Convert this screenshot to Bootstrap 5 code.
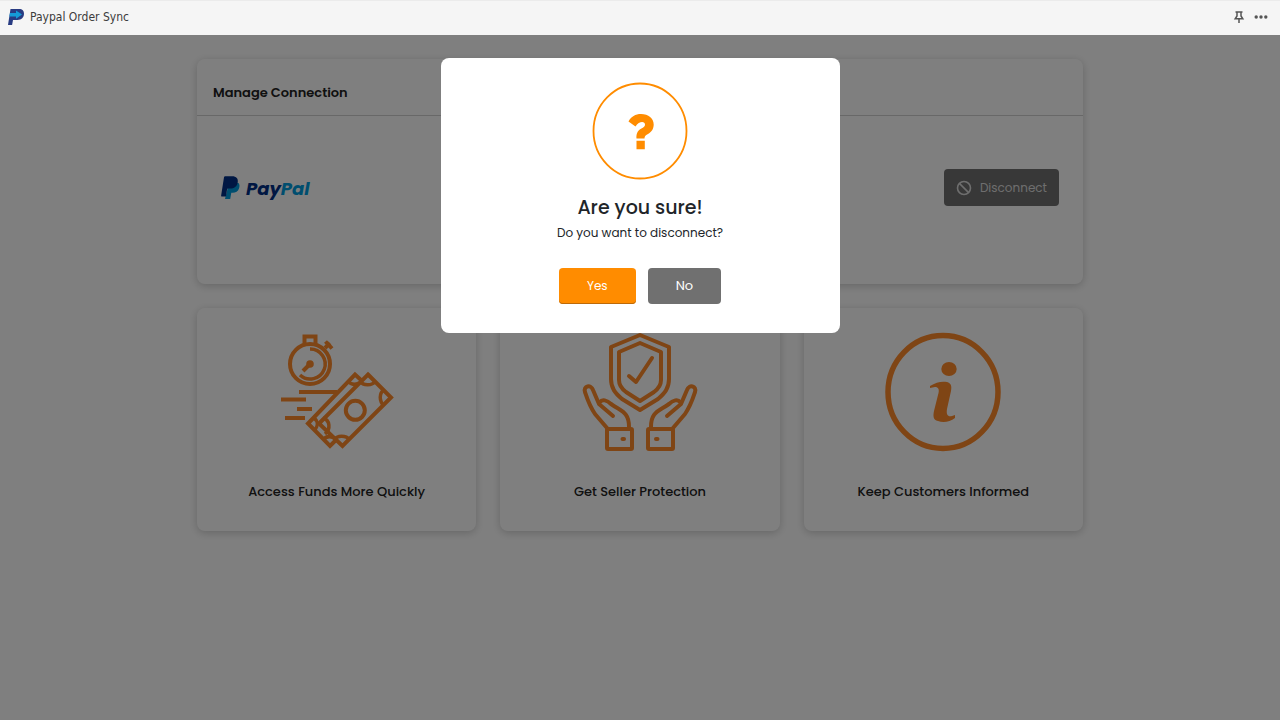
<!DOCTYPE html>
<html lang="en">
<head>
<meta charset="utf-8">
<meta name="viewport" content="width=device-width, initial-scale=1">
<title>Paypal Order Sync</title>
<link href="https://cdn.jsdelivr.net/npm/bootstrap@5.3.0/dist/css/bootstrap.min.css" rel="stylesheet">
<style>
  body { font-family: Poppins, Inter, "Open Sans", sans-serif; background: #fff; color: #212529; font-size: 13px; }
  .app-bar { height: 35px; background: #f5f5f5; border-top: 1px solid #ebebeb; padding: 0 8px 2px; }
  .app-title { font: 12px/18px "DejaVu Sans Condensed", "Noto Sans", sans-serif; color: #3c3c3c; margin-left: 6px; }
  .icon-btn { border: 0; background: none; padding: 0; color: #555; display: flex; }
  .page-wrap { max-width: 910px; padding: 24px 12px; }
  .panel { background: #fff; border: 0; border-radius: 8px; box-shadow: 0 2px 8px rgba(0, 0, 0, .2); }
  .panel-head { padding: 22px 16px 10px; border-bottom: 1px solid #d0d0d0; }
  .panel-head h1 { font-size: 13px; line-height: 24px; font-weight: 600; margin: 0; color: #222; }
  .panel-main { padding: 53px 24px 78px; }
  .btn-off { background: #707070; color: #ddd; font-size: 12px; line-height: 25px; padding: 6px 12px; border: 0; border-radius: 4px; }
  .feature { padding: 24px 16px 25px; min-height: 223px; }
  .feature h2 { font-size: 13px; line-height: 20px; font-weight: 500; margin: 30px 0 0; color: #222; }
  .feature svg { color: #ff8a2b; }
  .shade { background: rgba(0, 0, 0, .5); position: absolute; }
  .ask { max-width: 399px; margin: 23px auto; }
  .ask .modal-content { border: 0; border-radius: 8px; padding: 24px 24px 29px; }
  .ask h2 { font-size: 19px; line-height: 28px; font-weight: 500; margin: 14px 0 0; }
  .ask p { font-size: 12px; line-height: 20px; margin: 1px 0 25px; }
  .btn-ask { border: 0; border-radius: 4px; height: 36px; padding: 0 28px; color: #fff; }
  .btn-yes { background: #ff8c00; font-size: 12px; box-shadow: inset 0 -1px #bd6a08; }
  .btn-no { background: #707070; font-size: 13px; }
</style>
</head>
<body class="d-flex flex-column min-vh-100">
<header class="app-bar d-flex align-items-center">
  <svg width="16" height="18" viewBox="0 0 16 18" aria-hidden="true"><path fill="#283b82" d="M2.500 1H11c3.500 0 5 2 5 4.800C16 9.500 13.400 12 9.500 12H5l-.900 5H0z"/><path fill="#159bd7" d="M2 5h6V2.500l6 4-6 4.300V8.500H1.400z"/></svg>
  <span class="app-title me-auto">Paypal Order Sync</span>
  <button class="icon-btn me-2" aria-label="Pin"><svg width="14" height="14" viewBox="0 0 14 14" fill="none" stroke="currentColor" stroke-width="1.500"><path d="M3.500 2h7M5 2v4L3.200 8.800h7.600L9 6V2M7 8.800V13"/></svg></button>
  <button class="icon-btn me-1" aria-label="More options"><svg width="14" height="14" viewBox="0 0 14 14" fill="currentColor"><circle cx="2.200" cy="7" r="1.700"/><circle cx="7" cy="7" r="1.700"/><circle cx="11.800" cy="7" r="1.700"/></svg></button>
</header>

<main class="position-relative flex-fill">
  <div class="container page-wrap">
    <section class="card panel mb-4">
      <div class="panel-head"><h1>Manage Connection</h1></div>
      <div class="panel-main d-flex justify-content-between align-items-center">
        <svg width="100" height="26" viewBox="0 0 100 26" role="img" aria-label="PayPal">
          <path fill="#009cde" d="M8 8h9.500c1.300 1.500 1.200 3.600.500 5.600-1 3-3.300 4.200-6.300 4.200h-1.400L9.200 24H4z"/>
          <path fill="#002f86" d="M3 2.200Q3.200 1.300 4.100 1.300H11c4.400 0 6.500 2.300 5.700 6.300-.8 4-3.500 6-7.500 6H7.300c-.8 0-1.100.4-1.300 1.200L5 21.500H.600Q0 21.500.100 20.800z"/>
          <text x="25" y="20" font-family="Poppins, Lato, sans-serif" font-size="18" font-weight="700" font-style="italic"><tspan fill="#002f86">Pay</tspan><tspan fill="#009cde">Pal</tspan></text>
        </svg>
        <button class="btn btn-off d-flex align-items-center gap-2">
          <svg width="16" height="16" viewBox="0 0 16 16" fill="none" stroke="currentColor" stroke-width="1.600" aria-hidden="true"><circle cx="8" cy="8" r="6.500"/><path d="m3.400 3.400 9.200 9.200"/></svg>
          Disconnect
        </button>
      </div>
    </section>

    <div class="row g-4">
      <div class="col-4">
        <section class="card panel feature align-items-center text-center h-100">
          <svg width="120" height="120" viewBox="0 0 120 120" fill="none" stroke="currentColor" stroke-width="4" aria-hidden="true">
            <circle cx="33" cy="32" r="20"/><path d="M27.500 13V4.500h11V13"/><path d="m48 16 5-5M48.500 9.500l6.500 7"/>
            <path d="M33 17a15 15 0 1 1-10 26" stroke-width="3.500"/><circle cx="33" cy="32" r="3.800" fill="currentColor" stroke="none"/><path d="m33 32-7 7"/>
            <path d="M22 60h38M4 67.500h25M20 77h15M8 86h20" stroke-width="3.800"/>
            <path d="m84 48-6-5.500-47 49L53 114l6-6"/>
            <path d="m91 42.500 23 23L65.500 114 42 91.500z"/>
            <circle cx="78.300" cy="78.300" r="9.500"/>
            <path d="M83 49c3 5 12 5 16 0M107 58c-5 3-5 11 0 16M46 86c7 2 8 11 2 16M57 108c3-5 12-5 16 0M71 49c3 4 7 4 11 2M37 86c4 3 4 8 1 12M46 108c3-4 7-4 11-2" stroke-width="3.500"/>
          </svg>
          <h2>Access Funds More Quickly</h2>
        </section>
      </div>
      <div class="col-4">
        <section class="card panel feature align-items-center text-center h-100">
          <svg width="120" height="120" viewBox="0 0 120 120" fill="none" stroke="currentColor" stroke-width="4" stroke-linejoin="round" stroke-linecap="round" aria-hidden="true">
            <path d="M60 3 89 15v32c0 9-4 14-11 20L60 78 42 67c-7-6-11-11-11-20V15z"/>
            <path d="m60 11 21 9v28c0 6-3 9-7 12L60 69 46 60c-4-3-7-6-7-12V20z"/>
            <path d="m49 44 7 6 16-24"/>
            <g><path d="M27 96 15 82C9 73 7 66 5 60c-2-6 6-8 8-2l6 14 14 12M20 70c2-3 7-2 11 2 7 5 12 6 15 11 3 4 3 8 3 12"/><rect x="27" y="97" width="25" height="20" rx="1"/><path d="M42.500 107h1.500"/></g>
            <g transform="matrix(-1 0 0 1 120 0)"><path d="M27 96 15 82C9 73 7 66 5 60c-2-6 6-8 8-2l6 14 14 12M20 70c2-3 7-2 11 2 7 5 12 6 15 11 3 4 3 8 3 12"/><rect x="27" y="97" width="25" height="20" rx="1"/><path d="M42.500 107h1.500"/></g>
          </svg>
          <h2>Get Seller Protection</h2>
        </section>
      </div>
      <div class="col-4">
        <section class="card panel feature align-items-center text-center h-100">
          <svg width="120" height="120" viewBox="0 0 120 120" aria-hidden="true">
            <ellipse cx="60" cy="60" rx="55" ry="56.500" fill="none" stroke="currentColor" stroke-width="5.500"/>
            <ellipse cx="66" cy="37" rx="7.700" ry="7" fill="currentColor"/>
            <path fill="currentColor" d="M47 54c6-4 12-5 17-4 4 1 5 4 4 9l-4 18c-1 6 1 8 5 7l3-1v3c-5 4-12 5-17 3-5-1-5-5-4-10l4-16c2-6 0-8-3-8l-5 1z"/>
          </svg>
          <h2>Keep Customers Informed</h2>
        </section>
      </div>
    </div>
  </div>

  <div class="modal d-block shade" role="dialog" aria-modal="true" aria-labelledby="askTitle">
    <div class="modal-dialog ask">
      <div class="modal-content align-items-center text-center">
        <svg width="96" height="98" viewBox="0 0 96 98" aria-hidden="true">
          <ellipse cx="48" cy="49" rx="46.500" ry="47.500" fill="none" stroke="#ff8c00" stroke-width="1.800"/>
          <path fill="#ff8c00" d="M36.500 39.500C39 34.500 43.500 32 49 32c7.500 0 12.700 4.300 12.700 10.500 0 4.500-2.200 7.500-5.700 9.500-2.800 1.600-3.500 2.500-3.500 4.500h-8c-.4-4.500.9-7.700 4.500-9.800 2.900-1.600 4-2.600 4-4.300 0-3.500-6.200-3.500-9.500 2zM44.500 58.800h8.300v8.500h-8.300z"/>
        </svg>
        <h2 id="askTitle">Are you sure!</h2>
        <p>Do you want to disconnect?</p>
        <div class="d-flex">
          <button class="btn btn-ask btn-yes me-2">Yes</button>
          <button class="btn btn-ask btn-no ms-1">No</button>
        </div>
      </div>
    </div>
  </div>
</main>
<script src="https://cdn.jsdelivr.net/npm/bootstrap@5.3.0/dist/js/bootstrap.bundle.min.js"></script>
</body>
</html>
